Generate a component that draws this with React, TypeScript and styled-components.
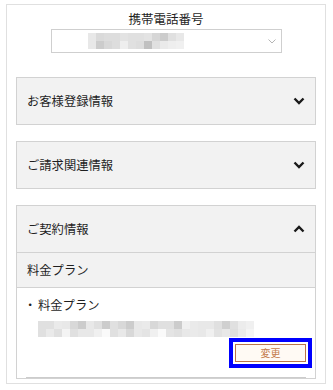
import React from 'react';
import styled, { createGlobalStyle } from 'styled-components';

const GlobalStyle = createGlobalStyle`
  html, body {
    margin: 0;
    padding: 0;
    background: #fff;
  }
  body {
    font-family: "Noto Sans CJK JP", "Noto Sans", sans-serif;
    color: #333;
  }
`;

const Page = styled.div`
  padding: 4px 7px 0 6px;
`;

const Card = styled.div`
  box-sizing: border-box;
  height: 380px;
  border: 1px solid #e0e0e0;
  padding: 5px 9px 0;
  overflow: hidden;
`;

const Title = styled.div`
  font-size: 12.5px;
  line-height: 18px;
  text-align: center;
  color: #1f1f1f;
`;

const SelectBox = styled.div`
  box-sizing: border-box;
  width: 231px;
  height: 24px;
  margin: 1px auto 0;
  border: 1px solid #cfcfcf;
  position: relative;
  display: flex;
  align-items: center;
  padding-left: 36px;
`;

const SelectArrow = styled.svg`
  position: absolute;
  right: 5px;
  top: 9px;
`;

const Mosaic = styled.div<{ $cols: number }>`
  display: grid;
  grid-template-columns: repeat(${(p) => p.$cols}, 8px);
  grid-auto-rows: 8px;
`;

const Tile = styled.span<{ $g: number }>`
  background: ${(p) => `rgb(${p.$g}, ${p.$g}, ${p.$g})`};
`;

const Accordion = styled.div`
  margin-top: 24px;
  display: flex;
  flex-direction: column;
  gap: 16px;
`;

const Item = styled.section`
  border: 1px solid #d2d2d2;
`;

const Header = styled.div`
  box-sizing: border-box;
  height: 46px;
  background: #f2f2f2;
  display: flex;
  align-items: center;
  justify-content: space-between;
  padding: 0 10px 0 10px;
  font-size: 12.3px;
  color: #1f1f1f;
`;

const SubHeader = styled.div`
  box-sizing: border-box;
  height: 36px;
  background: #f2f2f2;
  border-top: 1px solid #d2d2d2;
  border-bottom: 1px solid #d2d2d2;
  display: flex;
  align-items: center;
  padding: 0 10px;
  font-size: 12.3px;
  color: #1f1f1f;
`;

const Body = styled.div`
  padding: 8px 9px 0;
  background: #fff;
`;

const PlanLabel = styled.div`
  display: flex;
  align-items: center;
  font-size: 12.3px;
  line-height: 18px;
  color: #1f1f1f;
  margin-left: -2px;
`;

const Bullet = styled.span`
  display: inline-block;
  width: 12px;
  text-align: center;
  margin-right: 2px;
`;

const PlanValue = styled.div`
  margin: 7px 0 0 12px;
`;

const Actions = styled.div`
  display: flex;
  justify-content: flex-end;
  margin-top: 7px;
`;

const ChangeButton = styled.button`
  box-sizing: border-box;
  width: 71px;
  height: 18px;
  padding: 0;
  border: 1px solid #b9744a;
  background: #fffaf4;
  color: #c47a4c;
  font-family: "Noto Sans CJK JP", sans-serif;
  font-size: 10px;
  line-height: 16px;
  outline: 4px solid #0000ff;
  outline-offset: 2px;
  cursor: pointer;
`;

const Divider = styled.hr`
  margin: 15px 0 0;
  border: 0;
  border-top: 1px solid #cccccc;
`;

const Chevron = ({ up }: { up?: boolean }) => (
  <svg width="12" height="8" viewBox="0 0 12 8">
    <path
      d={up ? 'M1.5 6.5 L6 2 L10.5 6.5' : 'M1.5 1.5 L6 6 L10.5 1.5'}
      fill="none"
      stroke="#1a1a1a"
      strokeWidth="2.4"
    />
  </svg>
);

const phoneShades = [
  [232, 218, 221, 221, 227, 224, 224, 227, 214, 204, 224, 232],
  [232, 204, 216, 221, 238, 224, 221, 192, 224, 234, 238, 240],
];

const planShades = [
  [224, 224, 234, 232, 216, 204, 232, 224, 204, 224, 216, 204, 232, 234, 216, 224, 224, 204, 240, 234, 232, 232, 224, 208, 224, 236, 240],
  [224, 234, 224, 244, 224, 232, 232, 240, 250, 224, 232, 216, 232, 228, 240, 250, 228, 224, 232, 234, 232, 240, 226, 232, 222, 234, 244],
];

const Pixelated = ({ rows }: { rows: number[][] }) => (
  <Mosaic $cols={rows[0].length}>
    {rows.flatMap((row, r) => row.map((g, c) => <Tile key={`${r}-${c}`} $g={g} />))}
  </Mosaic>
);

export default function App() {
  return (
    <>
      <GlobalStyle />
      <Page>
        <Card>
          <Title>携帯電話番号</Title>
          <SelectBox>
            <Pixelated rows={phoneShades} />
            <SelectArrow width="8" height="5" viewBox="0 0 8 5">
              <path d="M0.5 0.5 L4 4 L7.5 0.5" fill="none" stroke="#b5b5b5" strokeWidth="1" />
            </SelectArrow>
          </SelectBox>

          <Accordion>
            <Item>
              <Header>
                お客様登録情報
                <Chevron />
              </Header>
            </Item>
            <Item>
              <Header>
                ご請求関連情報
                <Chevron />
              </Header>
            </Item>
            <Item>
              <Header>
                ご契約情報
                <Chevron up />
              </Header>
              <SubHeader>料金プラン</SubHeader>
              <Body>
                <PlanLabel>
                  <Bullet>・</Bullet>料金プラン
                </PlanLabel>
                <PlanValue>
                  <Pixelated rows={planShades} />
                </PlanValue>
                <Actions>
                  <ChangeButton>変更</ChangeButton>
                </Actions>
                <Divider />
              </Body>
            </Item>
          </Accordion>
        </Card>
      </Page>
    </>
  );
}
